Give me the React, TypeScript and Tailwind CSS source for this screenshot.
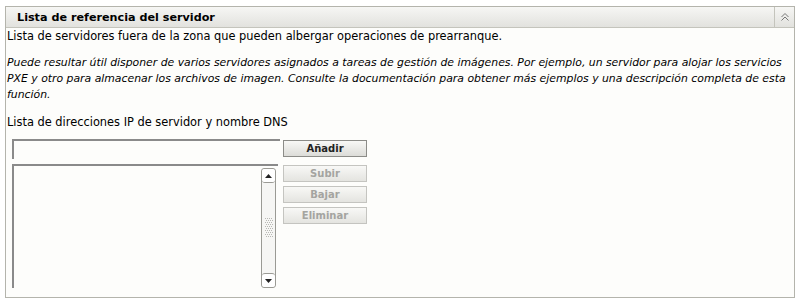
export default function App() {
  return (
    <div className="w-[800px] h-[303px] bg-white pt-[6px] px-[5px] font-['DejaVu_Sans',sans-serif] text-[11.4px] text-black">
      <div className="border border-[#b4b4ac] bg-[#fdfdfb] h-[292px]">
        <div className="flex h-[21px] items-center border-b border-[#c4c4bc] bg-gradient-to-b from-[#f6f6f4] to-[#e2e2de]">
          <div className="flex-1 pl-[11px] pt-[1px] font-bold text-[11.2px] leading-none">Lista de referencia del servidor</div>
          <div className="flex h-full w-[20px] items-center justify-center border-l border-[#c4c4bc]">
            <svg width="10" height="10" viewBox="0 0 10 10" fill="none" stroke="#777" strokeWidth="1">
              <path d="M1.5 5 L5 1.5 L8.5 5" />
              <path d="M1.5 8.5 L5 5 L8.5 8.5" />
            </svg>
          </div>
        </div>
        <div className="pl-[1px]">
          <p className="leading-[16px]">Lista de servidores fuera de la zona que pueden albergar operaciones de prearranque.</p>
          <p className="mt-[11px] italic text-[10.85px] leading-[16px] pr-[1px]">
            Puede resultar útil disponer de varios servidores asignados a tareas de gestión de imágenes. Por ejemplo, un servidor para alojar los servicios PXE y otro para almacenar los archivos de imagen. Consulte la documentación para obtener más ejemplos y una descripción completa de esta función.
          </p>
          <p className="mt-[11px] leading-[16px]">Lista de direcciones IP de servidor y nombre DNS</p>
          <div className="mt-[9px] ml-[5px] flex gap-[3px]">
            <div className="flex flex-col gap-[5px]">
              <div className="h-[20px] w-[268px] border-t-2 border-l-2 border-[#8a8a8a] bg-[#fdfdfb]" />
              <div className="flex h-[124px] w-[266px] border-t-2 border-l-2 border-[#8a8a8a] bg-[#fdfdfb]">
                <div className="flex-1" />
                <div className="mt-[2px] mr-[2px] flex h-[120px] w-[15px] flex-col rounded-[3px] border border-[#9a9a94] bg-[#f6f6f4]">
                  <div className="flex h-[14px] items-center justify-center border-b border-[#9a9a94] rounded-[3px] bg-white">
                    <svg width="7" height="4" viewBox="0 0 7 4"><path d="M0 4 L3.5 0 L7 4 Z" fill="#222" /></svg>
                  </div>
                  <div className="flex flex-1 items-center justify-center">
                    <svg width="8" height="20" viewBox="0 0 8 20" fill="#b8b8b4">
                      {Array.from({ length: 10 }).map((_, r) =>
                        [0, 2, 4, 6].map((c) => (
                          <rect key={`${r}-${c}`} x={c + (r % 2)} y={r * 2} width="1" height="1" />
                        ))
                      )}
                    </svg>
                  </div>
                  <div className="flex h-[14px] items-center justify-center border-t border-[#9a9a94] rounded-[3px] bg-white">
                    <svg width="7" height="4" viewBox="0 0 7 4"><path d="M0 0 L3.5 4 L7 0 Z" fill="#222" /></svg>
                  </div>
                </div>
              </div>
            </div>
            <div className="flex flex-col gap-[4px] pt-[1px]">
              <button className="mb-[4px] h-[17px] w-[84px] border border-[#8c8c88] bg-gradient-to-b from-[#f8f8f6] to-[#dcdcd8] text-[10px] font-bold leading-none text-[#222]">Añadir</button>
              <button className="h-[17px] w-[84px] border border-[#c4c4c0] bg-gradient-to-b from-[#f8f8f6] to-[#e4e4e0] text-[10px] font-bold leading-none text-[#a4a4a0]">Subir</button>
              <button className="h-[17px] w-[84px] border border-[#c4c4c0] bg-gradient-to-b from-[#f8f8f6] to-[#e4e4e0] text-[10px] font-bold leading-none text-[#a4a4a0]">Bajar</button>
              <button className="h-[17px] w-[84px] border border-[#c4c4c0] bg-gradient-to-b from-[#f8f8f6] to-[#e4e4e0] text-[10px] font-bold leading-none text-[#a4a4a0]">Eliminar</button>
            </div>
          </div>
        </div>
      </div>
    </div>
  );
}
